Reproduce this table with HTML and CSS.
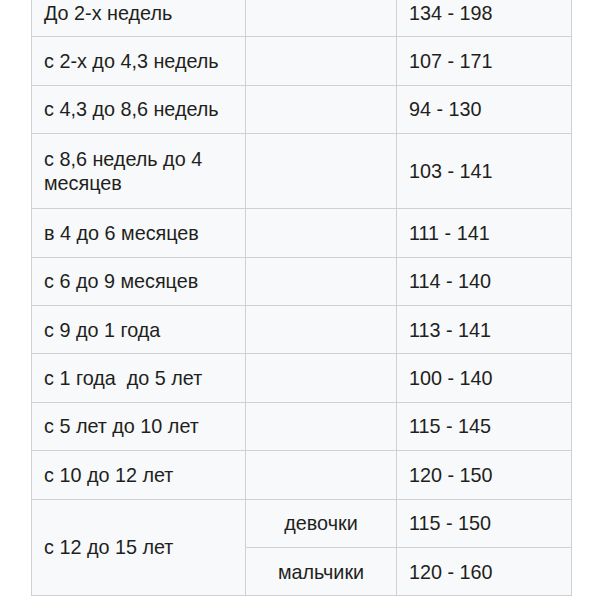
FILE: index.html
```html
<!DOCTYPE html>
<html lang="ru">
<head>
<meta charset="utf-8">
<link rel="stylesheet" href="styles.css">
</head>
<body>
<table class="pulse">
  <colgroup>
    <col class="c-age">
    <col class="c-sex">
    <col class="c-val">
  </colgroup>
  <tbody>
    <tr class="row"><td>До 2-х недель</td><td></td><td>134 - 198</td></tr>
    <tr class="row"><td>с 2-х до 4,3 недель</td><td></td><td>107 - 171</td></tr>
    <tr class="row"><td>с 4,3 до 8,6 недель</td><td></td><td>94 - 130</td></tr>
    <tr class="row tall"><td>с 8,6 недель до 4 месяцев</td><td></td><td>103 - 141</td></tr>
    <tr class="row"><td>в 4 до 6 месяцев</td><td></td><td>111 - 141</td></tr>
    <tr class="row"><td>с 6 до 9 месяцев</td><td></td><td>114 - 140</td></tr>
    <tr class="row"><td>с 9 до 1 года</td><td></td><td>113 - 141</td></tr>
    <tr class="row"><td>с 1 года&nbsp; до 5 лет</td><td></td><td>100 - 140</td></tr>
    <tr class="row"><td>с 5 лет до 10 лет</td><td></td><td>115 - 145</td></tr>
    <tr class="row"><td>с 10 до 12 лет</td><td></td><td>120 - 150</td></tr>
    <tr class="row"><td rowspan="2">с 12 до 15 лет</td><td class="sex">девочки</td><td>115 - 150</td></tr>
    <tr class="row"><td class="sex">мальчики</td><td>120 - 160</td></tr>
  </tbody>
</table>
</body>
</html>
```

FILE: styles.css
```css
html, body {
  margin: 0;
  padding: 0;
  background: #ffffff;
}

body {
  padding-left: 31px;
}

.pulse {
  margin-top: -12px;
  border-collapse: collapse;
  table-layout: fixed;
  width: 540px;
  background: #f8f9fa;
  font-family: "Liberation Sans", Arial, sans-serif;
  font-size: 19.8px;
  line-height: 24px;
  color: #1e1f21;
}

.c-age { width: 214px; }
.c-sex { width: 151px; }
.c-val { width: 175px; }

.pulse td {
  border: 1px solid #cdd1d6;
  padding: 0 12px;
  vertical-align: middle;
  text-align: left;
}

.pulse td.sex {
  text-align: center;
}

.row {
  height: 48.4px;
}

.row.tall {
  height: 75px;
}
```
